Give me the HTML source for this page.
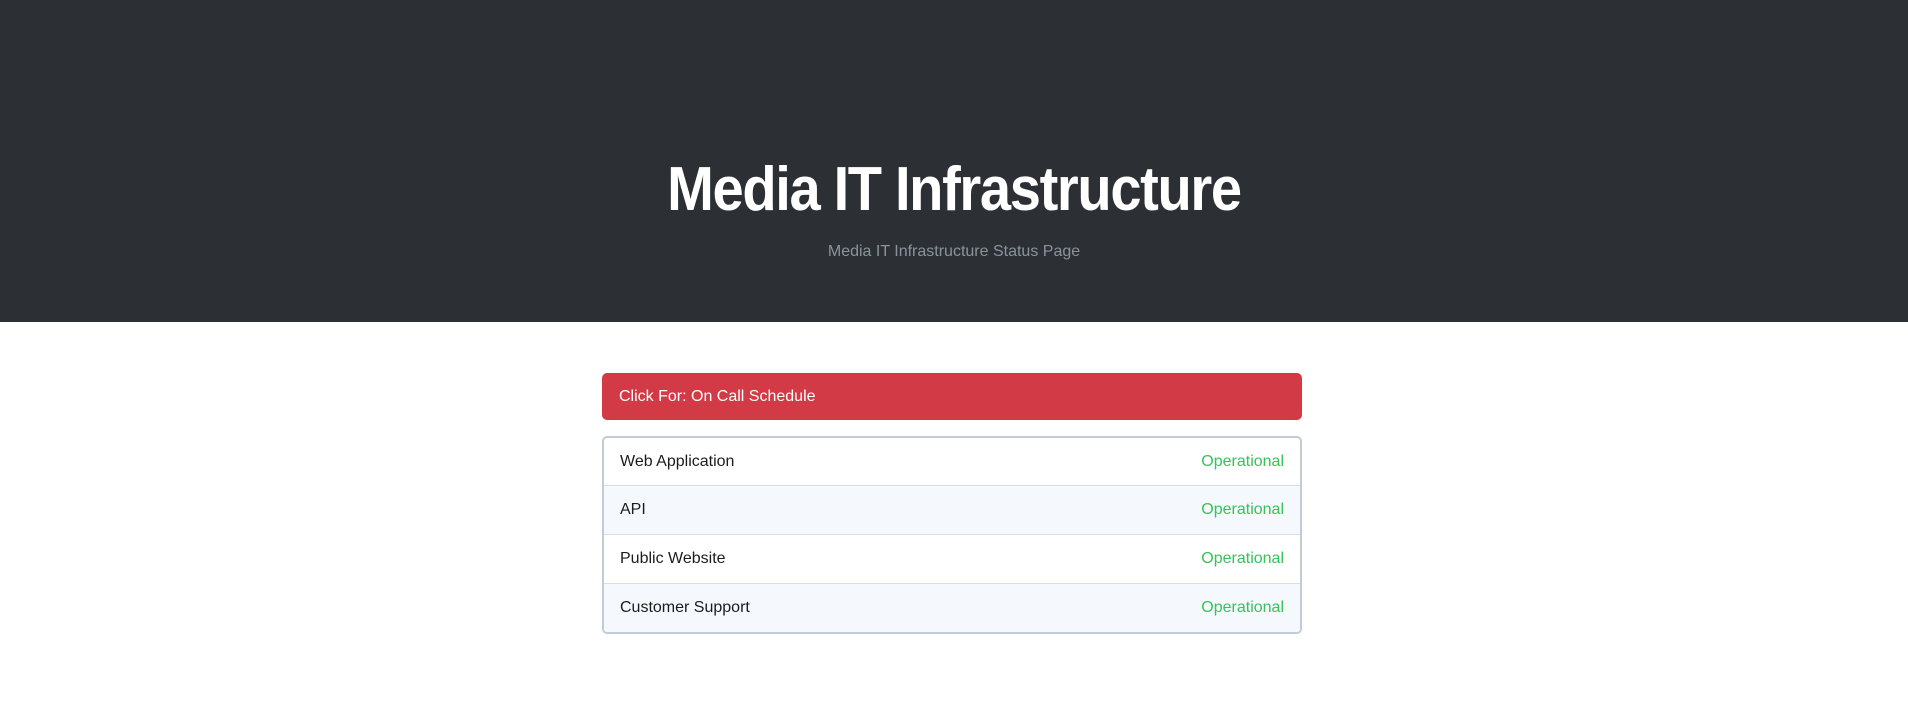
<!DOCTYPE html>
<html><head><meta charset="utf-8"><style>
body{margin:0;width:1908px;height:701px;background:#fff;font-family:"Liberation Sans",sans-serif;overflow:hidden}
.hdr{height:322px;background:#2c3035;position:relative}
.title{position:absolute;top:154px;left:0;width:100%;text-align:center;color:#fff;font-weight:bold;font-size:62px;line-height:72px}
.title span{display:inline-block;transform:scaleX(0.905);letter-spacing:-1.5px}
.sub{position:absolute;top:243px;width:100%;text-align:center;color:#8a939c;font-size:16px}
.red{position:absolute;left:602px;top:373px;width:700px;height:47px;background:#d23a46;border-radius:5px;color:#fff;font-size:16px;line-height:47px;box-sizing:border-box;padding-left:17px}
.list{position:absolute;left:602px;top:436px;width:700px;box-sizing:border-box;border:2px solid #c3ccd6;border-radius:5px;overflow:hidden}
.row{height:48px;line-height:48px;padding:0 16px;font-size:16px;color:#1c1c1c;display:flex;justify-content:space-between;border-top:1px solid #d6dde6}
.row:first-child{border-top:none;height:47px}
.row:nth-child(even){background:#f5f9fd}
.row b{font-weight:normal;color:#37c35a}
</style></head><body>
<div class="hdr"><div class="title"><span>Media IT Infrastructure</span></div><div class="sub">Media IT Infrastructure Status Page</div></div>
<div class="red">Click For: On Call Schedule</div>
<div class="list">
<div class="row"><span>Web Application</span><b>Operational</b></div>
<div class="row"><span>API</span><b>Operational</b></div>
<div class="row"><span>Public Website</span><b>Operational</b></div>
<div class="row"><span>Customer Support</span><b>Operational</b></div>
</div>
</body></html>
